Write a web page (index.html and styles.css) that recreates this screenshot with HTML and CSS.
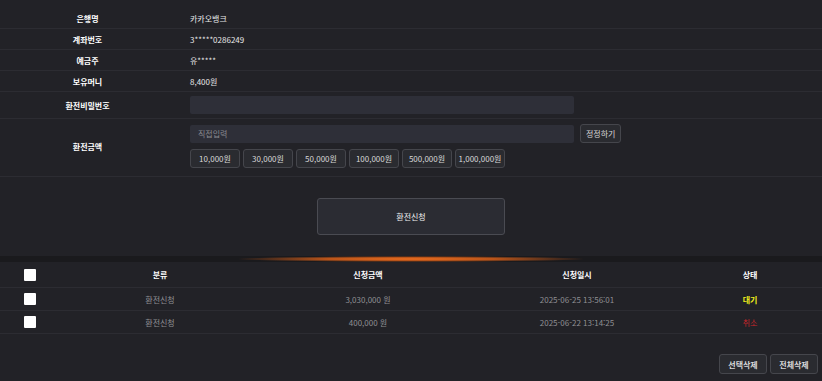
FILE: index.html
```html
<!DOCTYPE html>
<html lang="ko">
<head>
    <meta charset="UTF-8">
    <meta name="viewport" content="width=device-width, initial-scale=1.0">
    <title>환전신청</title>
    <link rel="stylesheet" href="styles.css">
</head>
<body>

    <div class="exchange-form">
        <div class="form-row">
            <div class="form-label">은행명</div>
            <div class="form-value">카카오뱅크</div>
        </div>
        <div class="form-row">
            <div class="form-label">계좌번호</div>
            <div class="form-value">3*****0286249</div>
        </div>
        <div class="form-row">
            <div class="form-label">예금주</div>
            <div class="form-value">유*****</div>
        </div>
        <div class="form-row">
            <div class="form-label">보유머니</div>
            <div class="form-value">8,400원</div>
        </div>
        <div class="form-row row-input">
            <div class="form-label">환전비밀번호</div>
            <div class="form-value">
                <input type="password" class="text-input">
            </div>
        </div>
        <div class="form-row row-amount">
            <div class="form-label">환전금액</div>
            <div class="form-value">
                <div class="amount-line">
                    <input type="text" class="text-input" placeholder="직접입력">
                    <button class="small-btn">정정하기</button>
                </div>
                <div class="amount-buttons">
                    <button class="small-btn amount-btn">10,000원</button>
                    <button class="small-btn amount-btn">30,000원</button>
                    <button class="small-btn amount-btn">50,000원</button>
                    <button class="small-btn amount-btn">100,000원</button>
                    <button class="small-btn amount-btn">500,000원</button>
                    <button class="small-btn amount-btn">1,000,000원</button>
                </div>
            </div>
        </div>
        <div class="submit-area">
            <button class="submit-btn">환전신청</button>
        </div>
    </div>

    <div class="glow-line"></div>

    <table class="history">
        <thead>
            <tr>
                <th class="col-check"><span class="checkbox"></span></th>
                <th class="col-type">분류</th>
                <th class="col-amount">신청금액</th>
                <th class="col-date">신청일시</th>
                <th class="col-state">상태</th>
            </tr>
        </thead>
        <tbody>
            <tr>
                <td><span class="checkbox"></span></td>
                <td>환전신청</td>
                <td>3,030,000 원</td>
                <td>2025-06-25 13:56:01</td>
                <td class="state-wait">대기</td>
            </tr>
            <tr>
                <td><span class="checkbox"></span></td>
                <td>환전신청</td>
                <td>400,000 원</td>
                <td>2025-06-22 13:14:25</td>
                <td class="state-cancel">취소</td>
            </tr>
        </tbody>
    </table>

    <div class="delete-buttons">
        <button class="small-btn delete-btn">선택삭제</button>
        <button class="small-btn delete-btn">전체삭제</button>
    </div>

</body>
</html>
```

FILE: styles.css
```css
body {
    font-family: "Noto Sans CJK KR", "Noto Sans", sans-serif;
    font-size: 8px;
    background-color: #222227;
    color: #fff;
    margin: 0;
    width: 822px;
    height: 381px;
    overflow: hidden;
}
.exchange-form {
    padding-top: 8px;
}
.form-row {
    display: flex;
    align-items: center;
    height: 20px;
    border-bottom: 1px solid #2c2c32;
}
.form-label {
    width: 175px;
    text-align: center;
    font-weight: bold;
    flex-shrink: 0;
}
.form-value {
    padding-left: 15px;
    color: #e8e8e8;
}
.row-input {
    height: 26px;
}
.row-amount {
    height: 57px;
    align-items: flex-start;
}
.row-amount .form-label {
    align-self: center;
    margin-top: -3px;
}
.row-amount .form-value {
    padding-top: 5px;
}
.text-input {
    display: block;
    box-sizing: border-box;
    width: 384px;
    height: 18px;
    border: none;
    border-radius: 2px;
    background-color: #2e2f38;
    color: #fff;
    font-family: inherit;
    font-size: 8px;
    padding: 0 8px;
    outline: none;
}
.text-input::placeholder {
    color: #8a8a90;
}
.amount-line {
    display: flex;
    gap: 6px;
    align-items: center;
}
.small-btn {
    box-sizing: border-box;
    height: 19px;
    border: 1px solid #45464c;
    border-radius: 3px;
    background-color: #2a2b30;
    color: #d8d8d8;
    font-family: inherit;
    font-size: 8px;
    padding: 0 5px;
    cursor: pointer;
}
.amount-buttons {
    display: flex;
    gap: 3px;
    margin-top: 6px;
}
.amount-btn {
    width: 50px;
    padding: 0;
}
.submit-area {
    display: flex;
    justify-content: center;
    padding: 21px 0 21px;
}
.submit-btn {
    width: 188px;
    height: 37px;
    border: 1px solid #4a4b52;
    border-radius: 3px;
    background-color: #2b2c33;
    color: #f0f0f0;
    font-family: inherit;
    font-size: 8px;
    cursor: pointer;
}
.glow-line {
    height: 6px;
    background-color: #1a1a1d;
    background-image: radial-gradient(ellipse 175px 3px at 50% 50%, #f07020 0%, rgba(215, 95, 25, 0.85) 50%, rgba(200, 85, 20, 0) 100%);
}
.history {
    width: 100%;
    border-collapse: collapse;
}
.history th, .history td {
    text-align: center;
    border-bottom: 1px solid #2c2c32;
    padding: 0;
}
.history th {
    height: 25px;
    font-weight: bold;
}
.history td {
    height: 22px;
    color: #909094;
}
.col-check { width: 60px; }
.col-type { width: 200px; }
.col-amount { width: 216px; }
.col-date { width: 202px; }
.checkbox {
    display: inline-block;
    width: 12px;
    height: 12px;
    background-color: #fff;
    border-radius: 1px;
    vertical-align: middle;
}
.history td.state-wait {
    color: #f0f01a;
    font-weight: bold;
}
.history td.state-cancel {
    color: #c8262b;
}
.delete-buttons {
    display: flex;
    justify-content: flex-end;
    gap: 3px;
    padding: 20px 4px 0 0;
}
.delete-btn {
    width: 48px;
    height: 20px;
    padding: 0;
    font-weight: bold;
}
```
